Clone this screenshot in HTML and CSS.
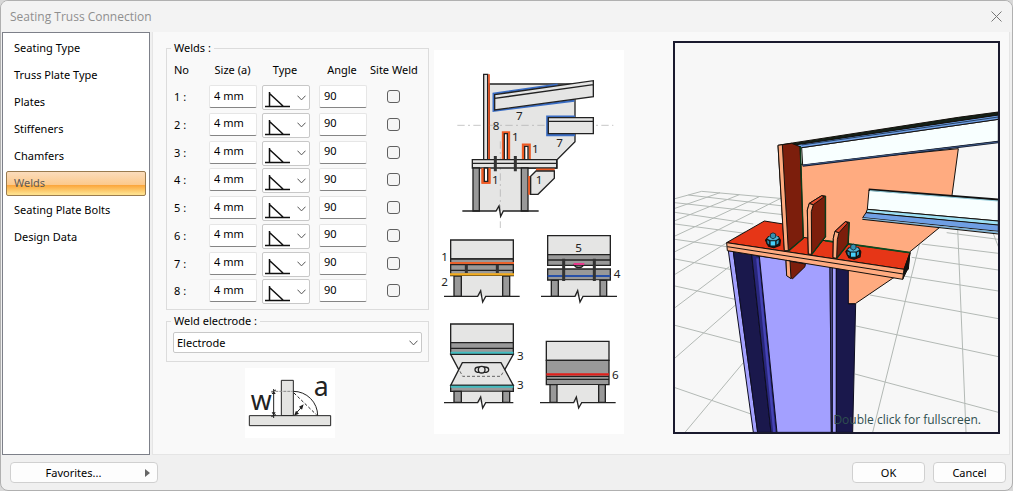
FILE: index.html
```html
<!DOCTYPE html>
<html lang="en">
<head>
<meta charset="utf-8">
<title>Seating Truss Connection</title>
<link rel="stylesheet" href="styles.css">
</head>
<body>
<svg class="defs" width="0" height="0" aria-hidden="true">
  <symbol id="fillet" viewBox="0 0 25 18"><path d="M0 16.5H25M4.5 2V16M4.5 3.5L18 16" fill="none" stroke="#111" stroke-width="1.5"/></symbol>
  <symbol id="chevron" viewBox="0 0 9 6"><path d="M.5 .7L4.500 4.900L8.500 .7" fill="none" stroke="#555" stroke-width="1"/></symbol>
  <symbol id="bolt" viewBox="-24 -24 48 48">
    <path d="M-20 0L-12 16L2 20L18 14L20 0L14-10L-12-10Z" fill="#0d2a36"/>
    <path d="M-18-3L-8 1L-8 15L-16 9Z" fill="#2a8aac"/>
    <path d="M-8 1L8 1L8 15L-8 15Z" fill="#45d0fb"/>
    <path d="M8 1L17-4L16 9L8 15Z" fill="#2fa5cc"/>
    <path d="M-16-5L-8-12L10-12L17-6L8 0L-8 0Z" fill="#4fb4d4" stroke="#0b1c26" stroke-width="1"/>
    <path d="M-7-17L0-20L7-17V-8L0-4L-7-8Z" fill="#3590b0" stroke="#0b1c26" stroke-width="2"/>
  </symbol>
</svg>
<main class="window">
  <header class="titlebar">
    <h1 class="title">Seating Truss Connection</h1>
    <button class="close" type="button" aria-label="Close"><svg width="11" height="11" viewBox="0 0 11 11"><path d="M.5 .5L10.500 10.500M10.500 .5L.5 10.500" stroke="#777" fill="none"/></svg></button>
  </header>
  <div class="body">
    <nav class="sidebar">
      <a class="item" href="#seating-type">Seating Type</a>
      <a class="item" href="#truss-plate-type">Truss Plate Type</a>
      <a class="item" href="#plates">Plates</a>
      <a class="item" href="#stiffeners">Stiffeners</a>
      <a class="item" href="#chamfers">Chamfers</a>
      <a class="item active" href="#welds" aria-current="page">Welds</a>
      <a class="item" href="#seating-plate-bolts">Seating Plate Bolts</a>
      <a class="item" href="#design-data">Design Data</a>
    </nav>
    <section class="panel" id="welds">
      <form class="form">
        <fieldset class="group">
          <legend>Welds :</legend>
          <table class="welds">
            <thead><tr><th class="c-no">No</th><th class="c-size">Size (a)</th><th class="c-type">Type</th><th class="c-angle">Angle</th><th class="c-site">Site Weld</th></tr></thead>
            <tbody>
              <tr><td>1 :</td><td><input class="field" value="4 mm" aria-label="Size 1"></td><td><span class="combo"><select class="pick" aria-label="Type 1"><option aria-label="Fillet"></option></select><svg class="weld"><use href="#fillet"/></svg><svg class="arrow"><use href="#chevron"/></svg></span></td><td><input class="field" value="90" aria-label="Angle 1"></td><td class="c-site"><input class="check" type="checkbox" aria-label="Site weld 1"></td></tr>
              <tr><td>2 :</td><td><input class="field" value="4 mm" aria-label="Size 2"></td><td><span class="combo"><select class="pick" aria-label="Type 2"><option aria-label="Fillet"></option></select><svg class="weld"><use href="#fillet"/></svg><svg class="arrow"><use href="#chevron"/></svg></span></td><td><input class="field" value="90" aria-label="Angle 2"></td><td class="c-site"><input class="check" type="checkbox" aria-label="Site weld 2"></td></tr>
              <tr><td>3 :</td><td><input class="field" value="4 mm" aria-label="Size 3"></td><td><span class="combo"><select class="pick" aria-label="Type 3"><option aria-label="Fillet"></option></select><svg class="weld"><use href="#fillet"/></svg><svg class="arrow"><use href="#chevron"/></svg></span></td><td><input class="field" value="90" aria-label="Angle 3"></td><td class="c-site"><input class="check" type="checkbox" aria-label="Site weld 3"></td></tr>
              <tr><td>4 :</td><td><input class="field" value="4 mm" aria-label="Size 4"></td><td><span class="combo"><select class="pick" aria-label="Type 4"><option aria-label="Fillet"></option></select><svg class="weld"><use href="#fillet"/></svg><svg class="arrow"><use href="#chevron"/></svg></span></td><td><input class="field" value="90" aria-label="Angle 4"></td><td class="c-site"><input class="check" type="checkbox" aria-label="Site weld 4"></td></tr>
              <tr><td>5 :</td><td><input class="field" value="4 mm" aria-label="Size 5"></td><td><span class="combo"><select class="pick" aria-label="Type 5"><option aria-label="Fillet"></option></select><svg class="weld"><use href="#fillet"/></svg><svg class="arrow"><use href="#chevron"/></svg></span></td><td><input class="field" value="90" aria-label="Angle 5"></td><td class="c-site"><input class="check" type="checkbox" aria-label="Site weld 5"></td></tr>
              <tr><td>6 :</td><td><input class="field" value="4 mm" aria-label="Size 6"></td><td><span class="combo"><select class="pick" aria-label="Type 6"><option aria-label="Fillet"></option></select><svg class="weld"><use href="#fillet"/></svg><svg class="arrow"><use href="#chevron"/></svg></span></td><td><input class="field" value="90" aria-label="Angle 6"></td><td class="c-site"><input class="check" type="checkbox" aria-label="Site weld 6"></td></tr>
              <tr><td>7 :</td><td><input class="field" value="4 mm" aria-label="Size 7"></td><td><span class="combo"><select class="pick" aria-label="Type 7"><option aria-label="Fillet"></option></select><svg class="weld"><use href="#fillet"/></svg><svg class="arrow"><use href="#chevron"/></svg></span></td><td><input class="field" value="90" aria-label="Angle 7"></td><td class="c-site"><input class="check" type="checkbox" aria-label="Site weld 7"></td></tr>
              <tr><td>8 :</td><td><input class="field" value="4 mm" aria-label="Size 8"></td><td><span class="combo"><select class="pick" aria-label="Type 8"><option aria-label="Fillet"></option></select><svg class="weld"><use href="#fillet"/></svg><svg class="arrow"><use href="#chevron"/></svg></span></td><td><input class="field" value="90" aria-label="Angle 8"></td><td class="c-site"><input class="check" type="checkbox" aria-label="Site weld 8"></td></tr>
            </tbody>
          </table>
        </fieldset>
        <fieldset class="group electrode">
          <legend id="electrode-label">Weld electrode :</legend>
          <span class="combo wide"><select class="pick" aria-labelledby="electrode-label"><option>Electrode</option></select><svg class="arrow"><use href="#chevron"/></svg></span>
        </fieldset>
        <svg class="throat" viewBox="15 12 270 210" role="img" aria-label="Weld throat a and leg w">
          <g fill="#e4e4e2" stroke="#222" stroke-width="3"><path d="M124 49H160V155H124Z"/><path d="M28 155H272V185H28Z"/></g>
          <g fill="none" stroke="#222" stroke-width="3"><path d="M160 82A73 73 0 0 1 233 155"/><path d="M101 75V162M94 84L108 78M94 158L108 152" /><path d="M94 82H158" stroke="#888" stroke-dasharray="9 3"/><path d="M162 87L230 153" stroke-dasharray="9 6"/><path d="M166 150L188 126"/></g>
          <path d="M162 155L168 140L177 149ZM191 121L177 128L186 137ZM101 80L95 90H107ZM101 155L95 145H107Z" fill="#222"/>
          <text class="lens" x="32" y="137">w</text><text class="lens" x="221" y="95">a</text>
        </svg>
      </form>
      <svg class="diagram" viewBox="12 6 570 1152" role="img" aria-label="Weld positions">
        <g stroke="#222" stroke-width="4" fill="#e5e5e4">
          <path d="M178 108H435V281L381 335V360H178Z"/>
          <path d="M128 360H294V489H128Z" stroke="none"/>
          <path d="M211 280V540M82 232H550" stroke="#aaa" stroke-width="2" stroke-dasharray="22 10 6 10"/>
          <path d="M161 79H173V335H161Z"/>
          <path d="M177 79V335" stroke="#e8501e" stroke-width="5"/>
          <path d="M383 110L191 137V188L433 158" fill="none" stroke="#3a6dc4" stroke-width="7"/>
          <path d="M194 140L490 98V146L194 186ZM194 151L490 110"/>
          <path d="M435 206H352V261H435" fill="none" stroke="#3a6dc4" stroke-width="7"/>
          <path d="M355 209H490V257H355ZM355 220H490"/>
          <path d="M219 335V253H237V335M279 335V290H299V335M158 360V404H178V360" fill="none" stroke="#ee5a24" stroke-width="7"/>
          <path d="M223 257H232V335H223ZM284 295H294V335H284Z" fill="#fff"/>
          <path d="M127 335H380V360H127ZM127 346H380"/>
          <path d="M129 360H148V489H129ZM274 360H294V489H274Z" fill="#999"/>
          <path d="M158 360V404H178V360" fill="none" stroke="#ee5a24" stroke-width="7"/>
          <path d="M163 360H173V400H163Z" fill="#fff"/>
          <path d="M196 324V370M256 324V370" stroke="#333" stroke-width="9"/>
          <path d="M318 365H374M298 384V440" stroke="#ee5a24" stroke-width="7"/>
          <path d="M318 369H373V391L324 439H302V385Z"/>
          <path d="M97 489H198L207 474L212 505L220 489H326" fill="none"/>
        </g>
        <g class="num"><text x="258" y="215">7</text><text x="188" y="245">8</text><text x="246" y="278">1</text><text x="306" y="314">1</text><text x="379" y="297">7</text><text x="186" y="407">1</text><text x="317" y="407">1</text></g>
        <g transform="translate(0 534)" stroke="#222" stroke-width="4" fill="#e5e5e4">
          <path d="M62 42H250V99H62Z"/><path d="M62 99H250V149H62Z" fill="#999"/><path d="M62 116H250M62 133H250"/>
          <path d="M94 150H218V211H94Z" stroke="none"/><path d="M72 150H94V211H72ZM218 150H239V211H218Z" fill="#999"/>
          <path d="M60 111H252" stroke="#e8622c" stroke-width="6"/><path d="M60 145H252" stroke="#f5ad1c" stroke-width="7"/>
          <path d="M109 116V141M202 116V141" stroke="#333" stroke-width="9"/>
          <path d="M42 211H143L152 194L158 228L167 211H269" fill="none"/>

          <path d="M353 29H541V86H353Z"/><path d="M353 86H541V118H353ZM353 102H541M353 129H541V162H353Z" fill="#999"/>
          <path d="M386 163H508V211H386Z" stroke="none"/><path d="M364 163H385V211H364ZM510 163H530V211H510Z" fill="#999"/>
          <path d="M353 150H541" stroke="#2850a8" stroke-width="6"/>
          <path d="M401 98V165M493 98V165" stroke="#333" stroke-width="9"/>
          <path d="M433 117A14 11 0 0 0 460 117Z" fill="#888"/><path d="M431 114H463" stroke="#e8388c" stroke-width="6"/>
          <path d="M333 211H435L443 194L450 228L459 211H561" fill="none"/>

          <path d="M62 294H250V350H62Z"/><path d="M62 350H250V384H62ZM62 367H250" fill="#999"/>
          <path d="M62 385H250L218 442H92Z"/><path d="M62 380H250" stroke="#42bdc0" stroke-width="6"/>
          <path d="M97 410H213L250 478H62Z"/><path d="M90 436L98 451H212L222 434" fill="none" stroke-width="2" stroke-dasharray="9 6"/>
          <ellipse cx="148" cy="431" rx="13" ry="8"/><ellipse cx="163" cy="431" rx="13" ry="8"/><circle cx="155" cy="431" r="10" />
          <path d="M62 478H250V496H62Z" fill="#999"/><path d="M62 482H250" stroke="#42bdc0" stroke-width="6"/>
          <path d="M94 497H218V529H94Z" stroke="none"/><path d="M72 496H94V529H72ZM218 496H239V529H218Z" fill="#999"/>
          <path d="M42 530H143L152 513L158 546L167 530H250" fill="none"/>

          <path d="M349 346H537V403H349Z"/><path d="M349 403H537V476H349ZM349 451H537M349 460H537" fill="#999"/>
          <path d="M383 477H504V529H383Z" stroke="none"/><path d="M360 476H381V529H360ZM506 476H526V529H506Z" fill="#999"/>
          <path d="M349 445H537" stroke="#e0211c" stroke-width="7"/>
          <path d="M330 530H431L439 513L446 546L455 530H557" fill="none"/>
        </g>
        <g class="num" transform="translate(0 534)"><text x="34" y="105">1</text><text x="34" y="180">2</text><text x="436" y="78">5</text><text x="551" y="156">4</text><text x="261" y="402">3</text><text x="261" y="489">3</text><text x="546" y="459">6</text></g>
      </svg>
      <div class="preview">
        <svg class="model" viewBox="15 21 969 1167" preserveAspectRatio="xMidYMid slice" role="img" aria-label="3D model of the connection">
          <g stroke="#b3b9b5" stroke-width="3" fill="none">
            <path transform="translate(0 432)" d="M95 34L340 56M55 45L340 78M15 68L340 104M15 97L250 132M15 132L225 160M15 178L170 200M15 237L180 268M15 318L195 358M15 436L212 488M15 623L243 702M95 34L15 56M150 38L15 85M208 44L15 122M268 50L15 168M330 56L15 215M225 155L15 283M178 260L15 383M200 372L15 534M220 548L45 757"/>
            <path transform="translate(540 552)" d="M270 20L445 38M290 38L445 58M215 72L445 100M185 112L445 150M160 168L445 213M60 225L445 296M18 318L445 410M15 462L445 577M210 65L68 637M323 25L348 637M425 28L445 80"/>
          </g>
          <g stroke="#15100c" stroke-width="3" stroke-linejoin="round">
            <path d="M392 385L865 338L846 478L833 560L808 575L720 647L715 700L668 727L556 803H530V700L395 640Z" fill="#ffab80"/>
            <path d="M395 335L985 250V317L398 388Z" fill="#f8ffff"/>
            <path d="M365 326L985 236V250L395 335Z" fill="#6f9fe4"/>
            <path d="M395 327L985 243" stroke="#254064" stroke-width="3"/>
            <path d="M335 326L865 244L985 228V237L380 326Z" fill="#142018"/>
            <path d="M398 389L985 318" stroke="#111827" stroke-width="7"/><path d="M398 388L985 318" stroke="#5578b8" stroke-width="2"/>
            <path d="M597 462L985 492V555L592 520Z" fill="#f8ffff"/>
            <path d="M596 461L985 491" stroke="#111" stroke-width="7"/><path d="M600 464L985 495" stroke="#8fc9d8" stroke-width="3"/>
            <path d="M592 520L985 555V568L588 530Z" fill="#9ee0f4"/>
            <path d="M588 530L985 567V586L578 545Z" fill="#6f9fe4"/>
            <path d="M578 548L985 590" stroke="#7fb4d8" stroke-width="5"/><path d="M577 550L985 594" fill="none"/>
          </g>
          <g transform="translate(0 582)" stroke="#0d0d20" stroke-width="3">
            <path d="M175 62L190 65L263 607H250Z" fill="#a3a0ff"/>
            <path d="M190 65L245 73L303 607H263Z" fill="#1a184c"/>
            <path d="M245 73L268 80L321 607H303Z" fill="#29277c"/>
            <path d="M262 85L313 607" stroke="#4543b5" stroke-width="7"/>
            <path d="M268 78L480 108L484 607H321Z" fill="#a3a0ff"/>
            <path d="M480 108H487V607H484Z" fill="#6260a4"/>
            <path d="M487 110H499V607H487Z" fill="#a3a0ff"/>
            <path d="M499 110H535V222H557L548 607H499Z" fill="#1a184c"/>
          </g>
          <g transform="translate(150 282)" stroke="#15100c" stroke-width="3" stroke-linejoin="round">
            <path d="M20 338L133 273L190 282L250 322L315 332L570 368L552 418Z" fill="#e63617"/>
            <path d="M570 368L564 415L548 448L552 418Z" fill="#111"/>
            <path d="M20 338L552 418L548 448L22 362Z" fill="#ffab80"/><path d="M22 350L550 432" fill="none"/>
            <path d="M315 332L570 368" stroke="#0c4a20" stroke-width="5"/>
            <path d="M198 392L256 402L255 410L218 446L200 437Z" fill="#7c1e0c"/><path d="M198 391L210 393L213 446L200 437Z" fill="#ffab80"/>
            <path d="M174 46L215 40L240 50L250 325L205 362L193 362Z" fill="#7c1e0c"/>
            <path d="M174 46L187 44L205 362L193 362Z" fill="#ffab80"/>
            <path d="M241 48L250 325L205 364" fill="none" stroke="#0a3b1a" stroke-width="4"/>
            <path d="M262 240L268 220L305 197L317 198V320L275 373L265 372Z" fill="#7c1e0c"/>
            <path d="M262 240L268 220L280 224L274 245L275 373L265 372Z" fill="#ffab80"/><path d="M268 220L305 197L313 200L280 224Z" fill="#e04a2c"/>
            <path d="M316 198V320L275 374" fill="none" stroke="#0a3b1a" stroke-width="4"/>
            <path d="M340 325L345 304L376 275L388 277L385 342L350 385L339 383Z" fill="#7c1e0c"/>
            <path d="M340 325L345 304L357 308L352 329L350 385L339 383Z" fill="#ffab80"/><path d="M345 304L376 275L384 278L357 308Z" fill="#e04a2c"/>
            <path d="M387 277L384 342L350 386" fill="none" stroke="#0a3b1a" stroke-width="4"/>
            <use href="#bolt" x="132" y="304" width="54" height="54"/><use href="#bolt" x="373" y="338" width="54" height="54"/>
          </g>
        </svg>
        <p class="hint">Double click for fullscreen.</p>
      </div>
    </section>
  </div>
  <footer class="footer">
    <button class="btn favorites" type="button"><span>Favorites...</span><svg width="5" height="8" viewBox="0 0 5 8"><path d="M0 0L5 4L0 8Z" fill="#666"/></svg></button>
    <button class="btn" type="button">OK</button>
    <button class="btn" type="button">Cancel</button>
  </footer>
</main>
</body>
</html>
```
FILE: styles.css
```css
* { box-sizing: border-box; }
body { margin: 0; background: #d8d8d8; color: #000; font: 11px/14px "Noto Sans", "Open Sans", sans-serif; }
button, input, select { font: inherit; color: inherit; }
.defs { position: absolute; }
.window { min-height: 100vh; display: flex; flex-direction: column; background: #f0f0f0; border: 1px solid #b0b0b0; border-radius: 8px; overflow: hidden; }
.titlebar { height: 31px; display: flex; align-items: center; justify-content: space-between; padding: 0 10px 0 9px; background: #f3f3f3; }
.title { margin: 0; font-family: "Open Sans", "Noto Sans", sans-serif; font-size: 12px; font-weight: 400; color: #8f8f8f; }
.close { display: flex; padding: 0; border: 0; background: none; }
.body { flex: 1; display: grid; grid-template-columns: 148px minmax(0, 1fr); gap: 2px; padding: 0 2px 0 1px; }
.sidebar { display: flex; flex-direction: column; gap: 2px; padding: 3px; background: #fff; border: 1px solid #7d8089; }
.item { height: 25px; padding: 0 7px; border: 1px solid transparent; border-radius: 2px; line-height: 22px; color: #000; text-decoration: none; }
.item.active { border-color: #9a7b4f; color: #5f5a55; background: linear-gradient(#fbdcbc, #fcc98c 55%, #fba63c 58%, #fee08c 95%); }
.panel { display: grid; grid-template-columns: 263px 190px minmax(0, 1fr); align-items: start; padding: 9px 9px 16px 13px; background: #f9f9f9; border: 1px solid #e5e5e5; border-top: 0; }
.form { display: flex; flex-direction: column; gap: 4px; }
.group { margin: 0; padding: 0 6px 2px; border: 1px solid #dcdcdc; min-width: 0; }
.group legend { margin-left: -2px; padding: 0 3px; line-height: 14px; }
.electrode { padding: 4px 6px 8px; }
.welds { width: 100%; height: 252px; border-collapse: collapse; table-layout: fixed; }
.welds th, .welds td { padding: 0; font-weight: 400; vertical-align: top; text-align: left; }
.welds th { height: 30px; line-height: 30px; text-align: center; white-space: nowrap; }
.welds td:first-child, .welds th.c-no { padding-left: 1px; text-align: left; line-height: 24px; }
.welds th.c-no { width: 36px; line-height: 30px; }
.welds th.c-size { width: 53px; padding-right: 6px; }
.welds th.c-type { width: 57px; padding-right: 11px; }
.welds th.c-angle { width: 51px; padding-right: 5px; }
.welds .c-site { text-align: center; padding-right: 6px; }
.field { display: block; width: 48px; height: 23px; padding: 0 4px 3px; background: #fff; border: 1px solid #e6e6e6; border-bottom-color: #858585; border-radius: 2px; outline: 0; }
.combo { display: grid; align-items: center; width: 48px; height: 25px; }
.combo > * { grid-area: 1 / 1; }
.pick { appearance: none; width: 100%; height: 100%; margin: 0; padding: 0 3px; background: #fff; border: 1px solid #c8c8c8; border-radius: 2px; }
.weld { width: 25px; height: 18px; margin: 3px 0 0 3px; pointer-events: none; }
.arrow { width: 9px; height: 6px; margin-right: 4px; justify-self: end; pointer-events: none; }
.combo.wide { width: 100%; height: 21px; }
.check { appearance: none; display: block; width: 13px; height: 13px; margin: 5px auto 0; background: #f5f5f5; border: 1px solid #606060; border-radius: 3px; }
.throat { align-self: center; width: 90px; height: 70px; margin: 2px 15px 0 0; background: #fff; }
.lens { font-size: 80px; fill: #222; }
.diagram { width: 190px; height: 384px; margin: 9px 0 0 5px; background: #fff; }
.num { font-size: 35px; fill: #222; }
.preview { position: relative; display: flex; margin-left: 54px; border: 2px solid #1a1a2e; background: #f7f7f7; }
.model { width: 100%; height: 389px; }
.hint { position: absolute; right: 17px; bottom: 3px; margin: 0; font-family: "Open Sans", "Noto Sans", sans-serif; font-size: 12px; line-height: 18px; color: #2f4f4f; white-space: nowrap; }
.footer { flex: none; display: flex; align-items: center; gap: 8px; height: 35px; padding: 0 6px 0 9px; }
.btn { width: 73px; height: 21px; padding: 0; background: #fdfdfd; border: 1px solid #d0d0d0; border-radius: 4px; }
.favorites { display: flex; align-items: center; width: 148px; margin-right: auto; padding: 0 7px; }
.favorites span { flex: 1; padding-right: 16px; }
```
